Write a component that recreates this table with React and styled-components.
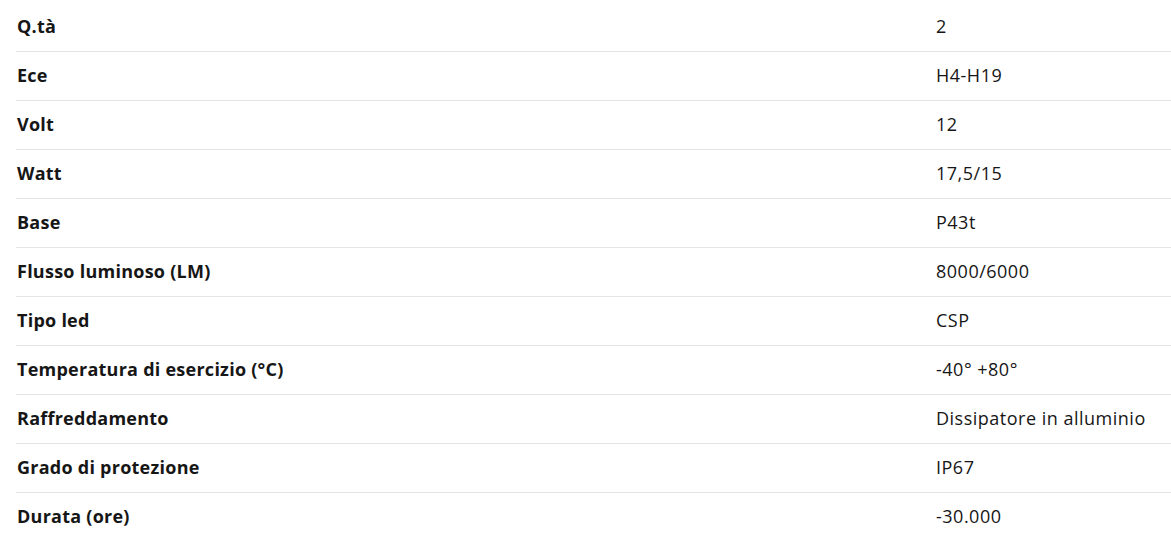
import styled, { createGlobalStyle } from 'styled-components'

/* ---------------------------------- DATA ---------------------------------- */
const specs = [
  ['Q.tà', '2'],
  ['Ece', 'H4-H19'],
  ['Volt', '12'],
  ['Watt', '17,5/15'],
  ['Base', 'P43t'],
  ['Flusso luminoso (LM)', '8000/6000'],
  ['Tipo led', 'CSP'],
  ['Temperatura di esercizio (°C)', '-40° +80°'],
  ['Raffreddamento', 'Dissipatore in alluminio'],
  ['Grado di protezione', 'IP67'],
  ['Durata (ore)', '-30.000'],
]

/* --------------------------------- STYLES --------------------------------- */
const GlobalStyles = createGlobalStyle`
  body {
    margin: 0;
    background: #ffffff;
    font-family: "Open Sans", Lato, sans-serif;
    color: #161616;
  }
`

const Wrapper = styled.div`
  padding: 3px 0 0 16px;
  width: 1171px;
  box-sizing: border-box;
  overflow: hidden;
`

const Table = styled.div`
  display: flex;
  flex-direction: column;
  width: 1200px;
`

const Row = styled.div`
  display: grid;
  grid-template-columns: 920px 1fr;
  align-items: center;

  height: 49px;
  padding-bottom: 2px;
  box-sizing: border-box;

  border-bottom: 1px solid #e4e4e4;
`

const Label = styled.div`
  padding-left: 1px;

  font-size: 18px;
  font-weight: 700;
  letter-spacing: 0.25px;
`

const Value = styled.div`
  font-size: 18px;
  font-weight: 400;
  letter-spacing: 0.5px;
`

/* ----------------------------------- APP ---------------------------------- */
export default function App() {
  return (
    <>
      <GlobalStyles />
      <Wrapper>
        <Table>
          {specs.map(([label, value]) => (
            <Row key={label}>
              <Label>{label}</Label>
              <Value>{value}</Value>
            </Row>
          ))}
        </Table>
      </Wrapper>
    </>
  )
}
